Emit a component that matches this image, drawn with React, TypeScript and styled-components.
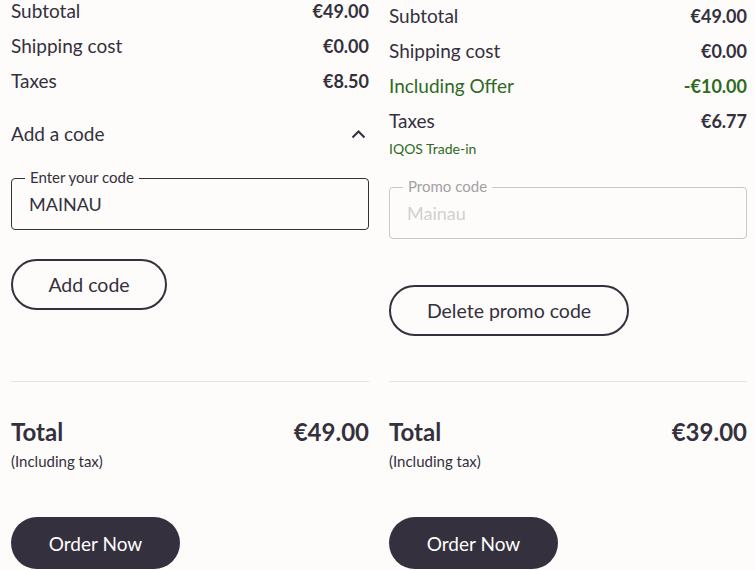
import styled, { createGlobalStyle } from 'styled-components';

const ink = '#34303d';
const green = '#2e6a1f';
const paper = '#fdfcfa';

const GlobalStyle = createGlobalStyle`
  html, body {
    margin: 0;
    padding: 0;
    background: ${paper};
    overflow: hidden;
  }
  body {
    font-family: Lato, "Noto Sans", sans-serif;
    color: ${ink};
  }
`;

const Page = styled.div`
  display: grid;
  grid-template-columns: 358px 358px;
  grid-template-rows: 381px auto;
  column-gap: 20px;
  padding-left: 11px;
  width: 755px;
  height: 570px;
  overflow: hidden;
  box-sizing: border-box;
`;

const Summary = styled.section<{ $offset: number }>`
  display: flex;
  flex-direction: column;
  align-items: flex-start;
  margin-top: ${(p) => p.$offset}px;
`;

const Row = styled.div<{ $green?: boolean }>`
  display: flex;
  justify-content: space-between;
  align-items: center;
  align-self: stretch;
  height: 35px;
  font-size: 19px;
  color: ${(p) => (p.$green ? green : ink)};
`;

const Amount = styled.span`
  font-size: 18px;
  font-weight: 700;
`;

const Note = styled.div`
  font-size: 14px;
  line-height: 18px;
  color: ${green};
  margin-top: 2px;
`;

const CodeHeader = styled.div`
  display: flex;
  justify-content: space-between;
  align-items: center;
  align-self: stretch;
  height: 35px;
  margin-top: 18px;
  font-size: 19px;
  padding-right: 3px;
`;

const Field = styled.div<{ $top: number; $disabled?: boolean }>`
  position: relative;
  align-self: stretch;
  box-sizing: border-box;
  height: 52px;
  margin-top: ${(p) => p.$top}px;
  border: ${(p) => (p.$disabled ? '1.5px solid #c9c8c7' : `1.5px solid ${ink}`)};
  border-radius: 4px;
  display: flex;
  align-items: center;
  padding-left: 17px;
  font-size: 18px;
  color: ${(p) => (p.$disabled ? '#d2d0ce' : ink)};
`;

const FieldLabel = styled.span<{ $disabled?: boolean }>`
  position: absolute;
  top: -11px;
  left: 13px;
  padding: 0 5px;
  background: ${paper};
  font-size: 15px;
  line-height: 18px;
  color: ${(p) => (p.$disabled ? '#a3a1a4' : ink)};
`;

const OutlineButton = styled.button<{ $top: number; $width: number }>`
  margin-top: ${(p) => p.$top}px;
  width: ${(p) => p.$width}px;
  height: 51px;
  border: 2px solid ${ink};
  border-radius: 26px;
  background: transparent;
  color: ${ink};
  font-family: inherit;
  font-size: 19.5px;
  padding: 0;
`;

const TotalPanel = styled.section`
  display: flex;
  flex-direction: column;
  align-items: flex-start;
`;

const Divider = styled.hr`
  align-self: stretch;
  margin: 0;
  border: none;
  border-top: 1.5px solid #e6e4e2;
`;

const TotalRow = styled.div`
  display: flex;
  justify-content: space-between;
  align-items: center;
  align-self: stretch;
  margin-top: 34px;
  height: 30px;
  font-size: 24px;
  font-weight: 700;
`;

const TaxNote = styled.div`
  margin-top: 5px;
  font-size: 15px;
  line-height: 20px;
`;

const OrderButton = styled.button`
  margin-top: 46px;
  width: 169px;
  height: 52px;
  border: none;
  border-radius: 26px;
  background: ${ink};
  color: #fff;
  font-family: inherit;
  font-size: 19px;
  padding: 0;
`;

const Chevron = () => (
  <svg width="15" height="10" viewBox="0 0 15 10" fill="none">
    <path d="M1.5 8.5 L7.5 2.5 L13.5 8.5" stroke={ink} strokeWidth="2" />
  </svg>
);

function Total({ amount }: { amount: string }) {
  return (
    <TotalPanel>
      <Divider />
      <TotalRow>
        <span>Total</span>
        <span>{amount}</span>
      </TotalRow>
      <TaxNote>(Including tax)</TaxNote>
      <OrderButton>Order Now</OrderButton>
    </TotalPanel>
  );
}

export default function App() {
  return (
    <>
      <GlobalStyle />
      <Page>
        <Summary $offset={-7}>
          <Row>
            <span>Subtotal</span>
            <Amount>€49.00</Amount>
          </Row>
          <Row>
            <span>Shipping cost</span>
            <Amount>€0.00</Amount>
          </Row>
          <Row>
            <span>Taxes</span>
            <Amount>€8.50</Amount>
          </Row>
          <CodeHeader>
            <span>Add a code</span>
            <Chevron />
          </CodeHeader>
          <Field $top={27}>
            <FieldLabel>Enter your code</FieldLabel>
            MAINAU
          </Field>
          <OutlineButton $top={29} $width={156}>Add code</OutlineButton>
        </Summary>

        <Summary $offset={-2}>
          <Row>
            <span>Subtotal</span>
            <Amount>€49.00</Amount>
          </Row>
          <Row>
            <span>Shipping cost</span>
            <Amount>€0.00</Amount>
          </Row>
          <Row $green>
            <span>Including Offer</span>
            <Amount>-€10.00</Amount>
          </Row>
          <Row>
            <span>Taxes</span>
            <Amount>€6.77</Amount>
          </Row>
          <Note>IQOS Trade-in</Note>
          <Field $top={29} $disabled>
            <FieldLabel $disabled>Promo code</FieldLabel>
            Mainau
          </Field>
          <OutlineButton $top={46} $width={240}>Delete promo code</OutlineButton>
        </Summary>

        <Total amount="€49.00" />
        <Total amount="€39.00" />
      </Page>
    </>
  );
}
